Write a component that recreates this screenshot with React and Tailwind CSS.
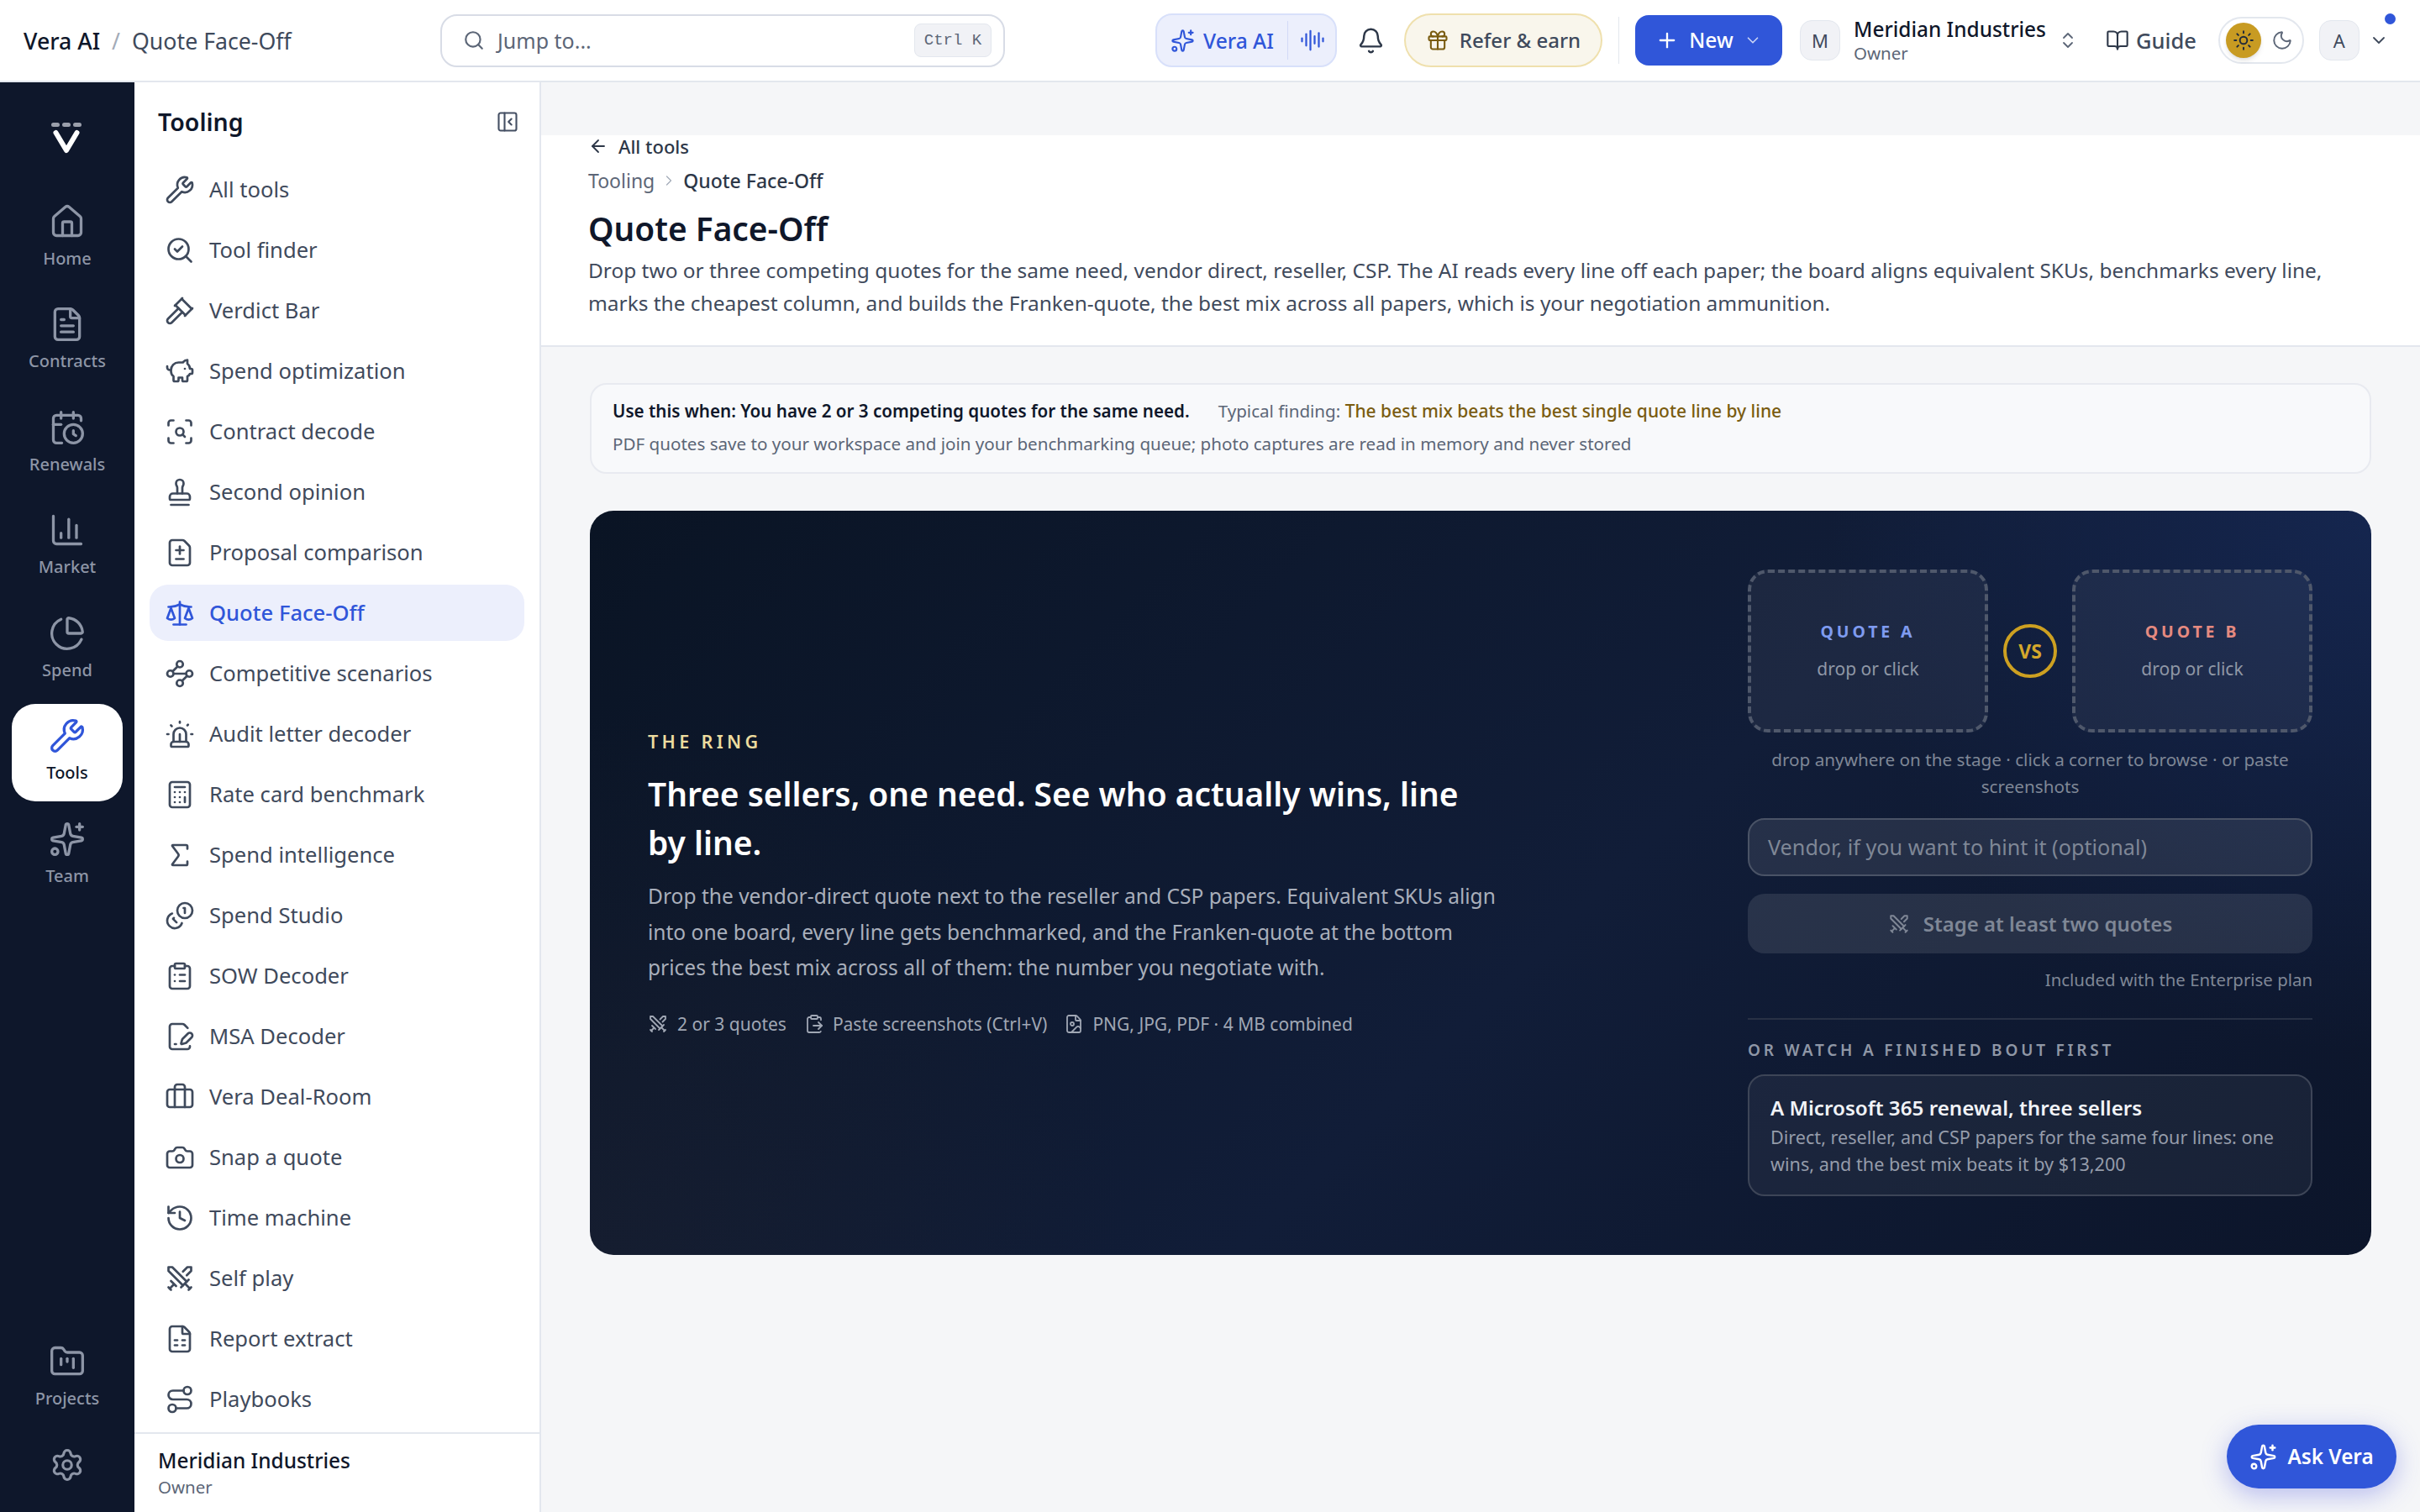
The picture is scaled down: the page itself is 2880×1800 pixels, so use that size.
import {
  ArrowLeft, AudioLines, Bell, BookOpen, Briefcase, Calculator, CalendarClock, Camera, ChartColumn, ChartPie,
  ChevronDown, ChevronRight, ChevronsUpDown, ClipboardList, ClipboardPaste, FileDiff, FileImage,
  FilePenLine, FileSpreadsheet, FileText, FolderKanban, Gavel, Gift, History, House, Moon, PanelLeftClose,
  PiggyBank, Plus, Route, Scale, ScanSearch, Search, SearchCheck, Settings, Sigma, Siren, Sparkles, Stamp, Sun,
  Swords, Waypoints, Wrench,
} from "lucide-react";

const CoinsIcon = ({ size, strokeWidth }) => (
  <svg width={size} height={size} viewBox="0 0 24 24" fill="none" stroke="currentColor" strokeWidth={strokeWidth} strokeLinecap="round" strokeLinejoin="round">
    <circle cx="16" cy="8" r="6" />
    <path d="M5.91 10.37A6 6 0 1 0 13.66 18" />
    <path d="M15 6h1v4" />
    <path d="M7.29 13.88 6.59 14.59 9.41 17.41" />
  </svg>
);

const railTop = [
  { label: "Home", icon: House },
  { label: "Contracts", icon: FileText },
  { label: "Renewals", icon: CalendarClock },
  { label: "Market", icon: ChartColumn },
  { label: "Spend", icon: ChartPie },
  { label: "Tools", icon: Wrench, active: true },
  { label: "Team", icon: Sparkles },
];

const tools = [
  { label: "All tools", icon: Wrench },
  { label: "Tool finder", icon: SearchCheck },
  { label: "Verdict Bar", icon: Gavel },
  { label: "Spend optimization", icon: PiggyBank },
  { label: "Contract decode", icon: ScanSearch },
  { label: "Second opinion", icon: Stamp },
  { label: "Proposal comparison", icon: FileDiff },
  { label: "Quote Face-Off", icon: Scale, active: true },
  { label: "Competitive scenarios", icon: Waypoints },
  { label: "Audit letter decoder", icon: Siren },
  { label: "Rate card benchmark", icon: Calculator },
  { label: "Spend intelligence", icon: Sigma },
  { label: "Spend Studio", icon: CoinsIcon },
  { label: "SOW Decoder", icon: ClipboardList },
  { label: "MSA Decoder", icon: FilePenLine },
  { label: "Vera Deal-Room", icon: Briefcase },
  { label: "Snap a quote", icon: Camera },
  { label: "Time machine", icon: History },
  { label: "Self play", icon: Swords },
  { label: "Report extract", icon: FileSpreadsheet },
  { label: "Playbooks", icon: Route },
];

const Logo = () => (
  <svg width="40" height="38" viewBox="0 0 40 38" fill="none" className="-ml-[3px]">
    <rect x="2" y="0" width="10" height="5" rx="2.5" fill="#9a9fab" />
    <rect x="15" y="0" width="10" height="5" rx="2.5" fill="#9a9fab" />
    <rect x="28" y="0" width="10" height="5" rx="2.5" fill="#9a9fab" />
    <path d="M7.5 12 L20 33 L32.5 12" stroke="#fff" strokeWidth="6" strokeLinecap="round" strokeLinejoin="round" />
  </svg>
);

const RailItem = ({ label, icon: Icon, active }) => (
  <div
    className={`flex h-[116px] w-[132px] flex-col items-center justify-center rounded-[28px] pb-[1px] ${
      active ? "bg-white text-[#0f172a]" : "text-[#8d95a6]"
    }`}
  >
    <Icon size={44} strokeWidth={1.8} className={active ? "text-[#3056d9]" : ""} />
    <span className="mt-[6px] text-[20px] leading-[32px] font-medium">{label}</span>
  </div>
);

const Rail = () => (
  <aside className="flex w-[160px] shrink-0 flex-col items-center bg-[#0e172b] pt-[48px]">
    <Logo />
    <div className="mt-[41px] flex flex-col gap-[6.5px]">
      {railTop.map((item) => (
        <RailItem key={item.label} {...item} />
      ))}
    </div>
    <div className="mt-auto flex flex-col items-center pb-[35px]">
      <RailItem label="Projects" icon={FolderKanban} />
      <Settings size={42} strokeWidth={1.8} className="mt-[25px] text-[#8d95a6]" />
    </div>
  </aside>
);

const ToolsPanel = () => (
  <aside className="flex w-[484px] shrink-0 flex-col border-r-2 border-[#e3e7ee] bg-white">
    <div className="flex h-[94px] items-center justify-between pr-[24px] pl-[28px]">
      <h2 className="text-[28.5px] font-semibold text-[#0f172a]">Tooling</h2>
      <PanelLeftClose size={28} strokeWidth={1.8} className="text-[#444f63]" />
    </div>
    <nav className="flex flex-col gap-[5px] px-[18px]">
      {tools.map(({ label, icon: Icon, active }) => (
        <div
          key={label}
          className={`flex h-[67px] items-center gap-[17px] rounded-[22px] pl-[18px] text-[25.6px] ${
            active ? "bg-[#eceffc] font-medium text-[#3056d9]" : "text-[#3f4a5c]"
          }`}
        >
          <Icon size={36} strokeWidth={1.8} />
          <span className="pt-[2px]">{label}</span>
        </div>
      ))}
    </nav>
    <div className="mt-auto flex h-[95px] flex-col justify-center border-t-2 border-[#e3e7ee] pb-[2px] pl-[28px]">
      <span className="text-[24.4px] leading-[34px] font-medium text-[#0f172a]">Meridian Industries</span>
      <span className="text-[20.5px] leading-[28px] text-[#5c6677]">Owner</span>
    </div>
  </aside>
);

const TopBar = () => (
  <header className="flex h-[98px] shrink-0 items-center border-b-2 border-[#e3e7ee] bg-white">
    <div className="flex w-[524px] shrink-0 items-center pt-[2px] pl-[28px] text-[26.7px]">
      <span className="font-medium text-[#0f172a]">Vera AI</span>
      <span className="mx-[14px] text-[#a3abb8]">/</span>
      <span className="text-[#3f4a5c]">Quote Face-Off</span>
    </div>
    <div className="flex h-[63px] w-[672px] shrink-0 items-center rounded-[20px] border-2 border-[#d8dce6] pr-[14px] pl-[25px] text-[#5c6677]">
      <Search size={26} strokeWidth={2} />
      <span className="ml-[15px] pt-[2px] text-[25px]">Jump to...</span>
      <span className="ml-auto flex h-[40px] w-[92px] items-center justify-center rounded-[8px] border border-[#e3e7ee] bg-[#f1f2f6] font-['Liberation_Mono',monospace] text-[19px]">
        Ctrl K
      </span>
    </div>
    <div className="ml-[179px] flex h-[64px] w-[216px] shrink-0 items-center rounded-[20px] border-2 border-[#d8e0fa] bg-[#eceffc] text-[#3056d9]">
      <Sparkles size={29} strokeWidth={1.8} className="ml-[16px]" />
      <span className="ml-[10px] pt-[2px] text-[24.6px] font-medium">Vera AI</span>
      <span className="ml-[16px] h-[46px] w-[1px] bg-[#d2daf6]" />
      <AudioLines size={30} strokeWidth={1.8} className="ml-[14px]" />
    </div>
    <Bell size={33} strokeWidth={1.8} className="ml-[24px] shrink-0 text-[#2d3748]" />
    <div className="ml-[23px] flex h-[64px] w-[236px] shrink-0 items-center justify-center gap-[12px] rounded-full border-2 border-[#efe0ad] bg-[#f9f6ec] text-[24px] font-medium text-[#3f4a5c]">
      <Gift size={28} strokeWidth={1.8} className="text-[#7a5c10]" />
      Refer &amp; earn
    </div>
    <span className="ml-[19px] h-[56px] w-[1px] bg-[#e3e7ee]" />
    <div className="ml-[19px] flex h-[60px] w-[175px] shrink-0 items-center justify-center gap-[12px] rounded-[16px] bg-[#3056d9] text-[24.5px] font-medium text-white">
      <Plus size={28} strokeWidth={2} />
      New
      <ChevronDown size={22} strokeWidth={1.8} className="text-[#cbd5f5]" />
    </div>
    <span className="ml-[21px] flex h-[48px] w-[48px] shrink-0 items-center justify-center rounded-[14px] border border-[#e3e7ee] bg-[#f1f2f6] text-[22px] text-[#3f4a5c]">
      M
    </span>
    <div className="ml-[16px] flex w-[230px] shrink-0 flex-col whitespace-nowrap">
      <span className="text-[24.4px] leading-[30px] font-medium text-[#0f172a]">Meridian Industries</span>
      <span className="text-[20.5px] leading-[26px] text-[#5c6677]">Owner</span>
    </div>
    <ChevronsUpDown size={24} strokeWidth={1.8} className="ml-[13px] shrink-0 text-[#5c6677]" />
    <div className="ml-[33px] flex shrink-0 items-center gap-[8px] text-[25.5px] font-medium text-[#3f4a5c]">
      <BookOpen size={28} strokeWidth={1.8} className="text-[#2d3748]" />
      Guide
    </div>
    <div className="ml-[26px] flex h-[56px] w-[102px] shrink-0 items-center gap-[12px] rounded-full border-2 border-[#e3e7ee] pl-[7px]">
      <span className="flex h-[42px] w-[42px] items-center justify-center rounded-full bg-[#c89b22] shadow-md">
        <Sun size={26} strokeWidth={1.8} className="text-[#1e293b]" />
      </span>
      <Moon size={26} strokeWidth={1.8} className="text-[#5c6677]" />
    </div>
    <span className="ml-[18px] flex h-[48px] w-[48px] shrink-0 items-center justify-center rounded-[14px] border border-[#e3e7ee] bg-[#f1f2f6] text-[22px] text-[#3f4a5c]">
      A
    </span>
    <div className="relative ml-[11px] shrink-0">
      <ChevronDown size={24} strokeWidth={1.8} className="text-[#3f4a5c]" />
      <span className="absolute top-[-20px] left-[19px] h-[13px] w-[13px] rounded-full bg-[#3056d9]" />
    </div>
  </header>
);

const PageHeader = () => (
  <section className="h-[252px] shrink-0 border-b-2 border-[#e3e7ee] bg-white pr-[50px] pl-[56px]">
    <div className="flex h-[26px] items-center gap-[12px] text-[22px] font-medium text-[#2d3748]">
      <ArrowLeft size={24} strokeWidth={1.8} />
      <span>All tools</span>
    </div>
    <div className="mt-[12px] flex h-[32px] items-center text-[23px] text-[#5c6677]">
      <span>Tooling</span>
      <ChevronRight size={20} strokeWidth={1.5} className="mx-[7px] text-[#a3abb8]" />
      <span className="font-medium text-[#2d3748]">Quote Face-Off</span>
    </div>
    <h1 className="mt-[12px] text-[38.8px] leading-[58px] font-semibold text-[#0f172a]">Quote Face-Off</h1>
    <p className="mt-[1px] text-[24.45px] leading-[39px] text-[#3f4a5c]">
      Drop two or three competing quotes for the same need, vendor direct, reseller, CSP. The AI reads every line off
      each paper; the board aligns equivalent SKUs, benchmarks every line, marks the cheapest column, and builds the
      Franken-quote, the best mix across all papers, which is your negotiation ammunition.
    </p>
  </section>
);

const InfoBar = () => (
  <div className="flex h-[108px] flex-col justify-center gap-[9px] rounded-[20px] border-2 border-[#e8eaf0] bg-[#f8f9fb] pb-[4px] pl-[25px] text-[20.6px] leading-[30px]">
    <p>
      <span className="font-semibold text-[#0f172a]">Use this when: You have 2 or 3 competing quotes for the same need.</span>
      <span className="ml-[34px] text-[#5c6677]">Typical finding: </span>
      <span className="text-[21px] font-medium text-[#7a5c10]">The best mix beats the best single quote line by line</span>
    </p>
    <p className="text-[#5c6677]">
      PDF quotes save to your workspace and join your benchmarking queue; photo captures are read in memory and never
      stored
    </p>
  </div>
);

const DropZone = ({ name, tone }) => (
  <div className="flex h-[194px] w-[286px] flex-col items-center justify-center rounded-[24px] border-4 border-dashed border-[#4f586b] bg-white/[0.05] pb-[2px]">
    <span className={`text-[19.5px] leading-[30px] font-bold tracking-[0.2em] ${tone}`}>{name}</span>
    <span className="mt-[14px] text-[21px] leading-[30px] text-[#8f97a6]">drop or click</span>
  </div>
);

const Hero = () => (
  <div className="mt-[44px] flex h-[886px] items-center justify-between rounded-[28px] bg-[radial-gradient(circle_at_100%_0%,#15264f_0%,rgba(21,38,79,0)_28%),radial-gradient(circle_at_0%_100%,rgba(40,40,50,0.28)_0%,rgba(40,40,50,0)_28%),linear-gradient(135deg,#0a1424_0%,#111d38_55%,#0c152a_100%)] pr-[70px] pl-[69px]">
    <div className="w-[1010px]">
      <p className="text-[21.6px] leading-[30px] font-semibold tracking-[0.2em] text-[#ecdc9f]">THE RING</p>
      <h2 className="mt-[18px] text-[38.9px] leading-[58px] font-semibold text-white">
        Three sellers, one need. See who actually wins, line by line.
      </h2>
      <p className="mt-[14px] text-[24.55px] leading-[42.5px] text-[#a9afbb]">
        Drop the vendor-direct quote next to the reseller and CSP papers. Equivalent SKUs align into one board, every
        line gets benchmarked, and the Franken-quote at the bottom prices the best mix across all of them: the number
        you negotiate with.
      </p>
      <div className="mt-[30px] flex items-center text-[21px] leading-[30px] text-[#a0a7b4]">
        <Swords size={24} strokeWidth={1.8} />
        <span className="ml-[11px]">2 or 3 quotes</span>
        <ClipboardPaste size={24} strokeWidth={1.8} className="ml-[21px]" />
        <span className="ml-[10px]">Paste screenshots (Ctrl+V)</span>
        <FileImage size={24} strokeWidth={1.8} className="ml-[20px]" />
        <span className="ml-[10px]">PNG, JPG, PDF · 4 MB combined</span>
      </div>
    </div>

    <div className="flex w-[672px] flex-col">
      <div className="flex items-center justify-between">
        <DropZone name="QUOTE A" tone="text-[#7f9bf0]" />
        <span className="flex h-[64px] w-[64px] items-center justify-center rounded-full border-4 border-[#cda021] text-[23px] font-bold text-[#d4a72c]">
          VS
        </span>
        <DropZone name="QUOTE B" tone="text-[#e58a80]" />
      </div>
      <p className="mt-[16px] text-center text-[20.7px] leading-[32px] text-[#7f8796]">
        drop anywhere on the stage · click a corner to browse · or paste screenshots
      </p>
      <div className="mt-[22px] flex h-[69px] items-center rounded-[20px] border-2 border-[#4a5366] bg-white/[0.09] pl-[22px] text-[25.2px] text-[#7f8796]">
        Vendor, if you want to hint it (optional)
      </div>
      <div className="mt-[21px] flex h-[71px] items-center justify-center gap-[16px] rounded-[20px] bg-white/[0.1] text-[24px] font-semibold text-[#7f8796]">
        <Swords size={26} strokeWidth={1.8} />
        Stage at least two quotes
      </div>
      <p className="mt-[15px] text-right text-[20.4px] leading-[32px] text-[#7f8796]">Included with the Enterprise plan</p>
      <div className="mt-[30px] border-t-2 border-[#283145] pt-[21px]">
        <p className="text-[19px] leading-[30px] font-semibold tracking-[0.2em] text-[#8f97a6]">
          OR WATCH A FINISHED BOUT FIRST
        </p>
        <div className="mt-[14px] flex h-[145px] flex-col justify-center rounded-[20px] border-2 border-[#3d4557] bg-white/[0.05] px-[25px]">
          <p className="text-[24.2px] leading-[36px] font-semibold text-[#f1f3f7]">A Microsoft 365 renewal, three sellers</p>
          <p className="mt-[1px] text-[21.6px] leading-[32px] text-[#959caa]">
            Direct, reseller, and CSP papers for the same four lines: one wins, and the best mix beats it by $13,200
          </p>
        </div>
      </div>
    </div>
  </div>
);

export default function App() {
  return (
    <div className="relative flex h-[1800px] w-[2880px] flex-col overflow-hidden bg-[#f5f6f8] font-['Noto_Sans',sans-serif]">
      <TopBar />
      <div className="flex min-h-0 flex-1">
        <Rail />
        <ToolsPanel />
        <main className="flex min-w-0 flex-1 flex-col pt-[63px]">
          <PageHeader />
          <div className="px-[58px] pt-[43px]">
            <InfoBar />
            <Hero />
          </div>
        </main>
      </div>
      <button className="absolute top-[1696px] left-[2650px] flex h-[76px] w-[202px] items-center justify-center gap-[12px] rounded-full bg-[#3056d9] text-[24.3px] font-semibold text-white shadow-[0_8px_30px_rgba(70,80,220,0.35)]">
        <Sparkles size={33} strokeWidth={1.8} />
        Ask Vera
      </button>
    </div>
  );
}
